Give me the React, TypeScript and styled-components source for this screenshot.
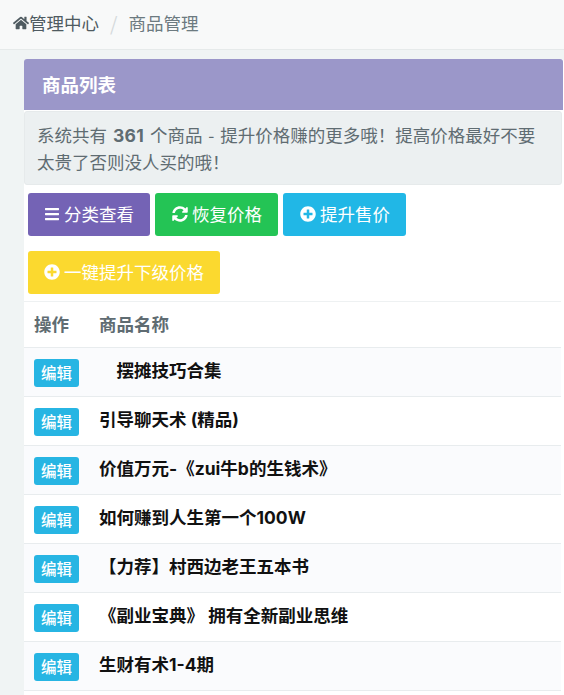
import React from 'react';
import styled, { createGlobalStyle } from 'styled-components';
import { FaHome, FaBars, FaSyncAlt, FaPlusCircle } from 'react-icons/fa';

const GlobalStyle = createGlobalStyle`
  html, body {
    margin: 0;
    padding: 0;
    height: 100%;
    overflow: hidden;
    background: #f0f4f4;
  }
  body {
    font-family: 'Noto Sans CJK SC', sans-serif;
    font-size: 17.5px;
    color: #5b6b73;
  }
`;

const Breadcrumb = styled.nav`
  display: flex;
  align-items: center;
  height: 50px;
  padding: 0 0 4px 13px;
  box-sizing: border-box;
  background: #f8f9f9;
  border-bottom: 1px solid #e6eaea;
`;

const Crumb = styled.span<{ $muted?: boolean }>`
  display: flex;
  align-items: center;
  color: ${(p) => (p.$muted ? '#6c7a80' : '#4f5b61')};
`;

const Separator = styled.span`
  margin: 0 11px;
  font-size: 19px;
  color: #d5dadc;
`;

const Content = styled.main`
  padding: 9px 0 0 24px;
`;

const Panel = styled.section`
  background: #fff;
  padding-bottom: 20px;
  border-radius: 3px 3px 0 0;
`;

const PanelHeading = styled.h2`
  margin: 0 1px 0 0;
  height: 51px;
  padding: 0 0 2px 18px;
  box-sizing: border-box;
  display: flex;
  align-items: center;
  background: #9b97c9;
  border-radius: 3px 3px 0 0;
  color: #fff;
  font-size: 18.5px;
  font-weight: 700;
`;

const Notice = styled.div`
  margin: 1px 2px 0 0;
  height: 74px;
  padding: 10px 24px 0 12px;
  box-sizing: border-box;
  background: #ecf0f1;
  border: 1px solid #e6eaeb;
  border-radius: 3px;
  font-size: 17.5px;
  line-height: 26px;
  word-spacing: 2px;
  color: #5f6c72;
`;

const Count = styled.strong`
  font-family: 'Inter', 'Noto Sans CJK SC', sans-serif;
  font-weight: 700;
  letter-spacing: 0.3px;
`;

const Toolbar = styled.div`
  display: flex;
  flex-wrap: wrap;
  gap: 15px 5px;
  padding: 8px 4px 7px;
  border-bottom: 1px solid #eef1f2;
  margin-right: 3px;
`;

const ActionButton = styled.button<{ $bg: string; $left?: number }>`
  display: inline-flex;
  align-items: center;
  gap: 4px;
  height: 43px;
  padding: 0 16px 2px ${(p) => p.$left ?? 16}px;
  border: 0;
  border-radius: 3px;
  background: ${(p) => p.$bg};
  color: #fff;
  font: inherit;
  font-size: 17.5px;
  white-space: nowrap;
`;

const Table = styled.table`
  width: calc(100% - 3px);
  border-collapse: collapse;
`;

const HeadCell = styled.th`
  height: 43px;
  padding: 0 0 2px 10px;
  text-align: left;
  font-size: 17.5px;
  font-weight: 700;
  color: #5f6c72;
  border-bottom: 1px solid #e8ecee;
  white-space: nowrap;
`;

const Row = styled.tr`
  height: 49px;
  border-bottom: 1px solid #e8ecee;

  &:nth-child(odd) {
    background: #fafbfd;
  }
`;

const ActionCell = styled.td`
  width: 55px;
  padding: 2px 0 0 10px;
`;

const NameCell = styled.td`
  padding: 0 0 6px 10px;
  font-family: 'Inter', 'Noto Sans CJK SC', sans-serif;
  font-weight: 700;
  font-size: 17.5px;
  color: #111;
  white-space: pre;
`;

const EditButton = styled.button`
  display: block;
  width: 45px;
  height: 28px;
  padding: 0 0 2px;
  border: 0;
  border-radius: 3px;
  background: #27b5e3;
  color: #fff;
  font: inherit;
  font-size: 15.5px;
  font-weight: 500;
`;

const goods = [
  '　摆摊技巧合集',
  '引导聊天术 (精品)',
  '价值万元-《zui牛b的生钱术》',
  '如何赚到人生第一个100W',
  '【力荐】村西边老王五本书',
  '《副业宝典》 拥有全新副业思维',
  '生财有术1-4期',
];

const App: React.FC = () => {
  return (
    <>
      <GlobalStyle />
      <Breadcrumb>
        <Crumb>
          <FaHome size={16} />
          管理中心
        </Crumb>
        <Separator>/</Separator>
        <Crumb $muted>商品管理</Crumb>
      </Breadcrumb>
      <Content>
        <Panel>
          <PanelHeading>商品列表</PanelHeading>
          <Notice>
            系统共有 <Count>361</Count> 个商品 - 提升价格赚的更多哦！提高价格最好不要太贵了否则没人买的哦！
          </Notice>
          <Toolbar>
            <ActionButton $bg="#7463b5">
              <FaBars size={16} />
              分类查看
            </ActionButton>
            <ActionButton $bg="#24c455" $left={17}>
              <FaSyncAlt size={16} />
              恢复价格
            </ActionButton>
            <ActionButton $bg="#21b7e6" $left={17}>
              <FaPlusCircle size={16} />
              提升售价
            </ActionButton>
            <ActionButton $bg="#fbd92f">
              <FaPlusCircle size={16} />
              一键提升下级价格
            </ActionButton>
          </Toolbar>
          <Table>
            <thead>
              <tr>
                <HeadCell>操作</HeadCell>
                <HeadCell>商品名称</HeadCell>
              </tr>
            </thead>
            <tbody>
              {goods.map((name) => (
                <Row key={name}>
                  <ActionCell>
                    <EditButton>编辑</EditButton>
                  </ActionCell>
                  <NameCell>{name}</NameCell>
                </Row>
              ))}
            </tbody>
          </Table>
        </Panel>
      </Content>
    </>
  );
};

export default App;
